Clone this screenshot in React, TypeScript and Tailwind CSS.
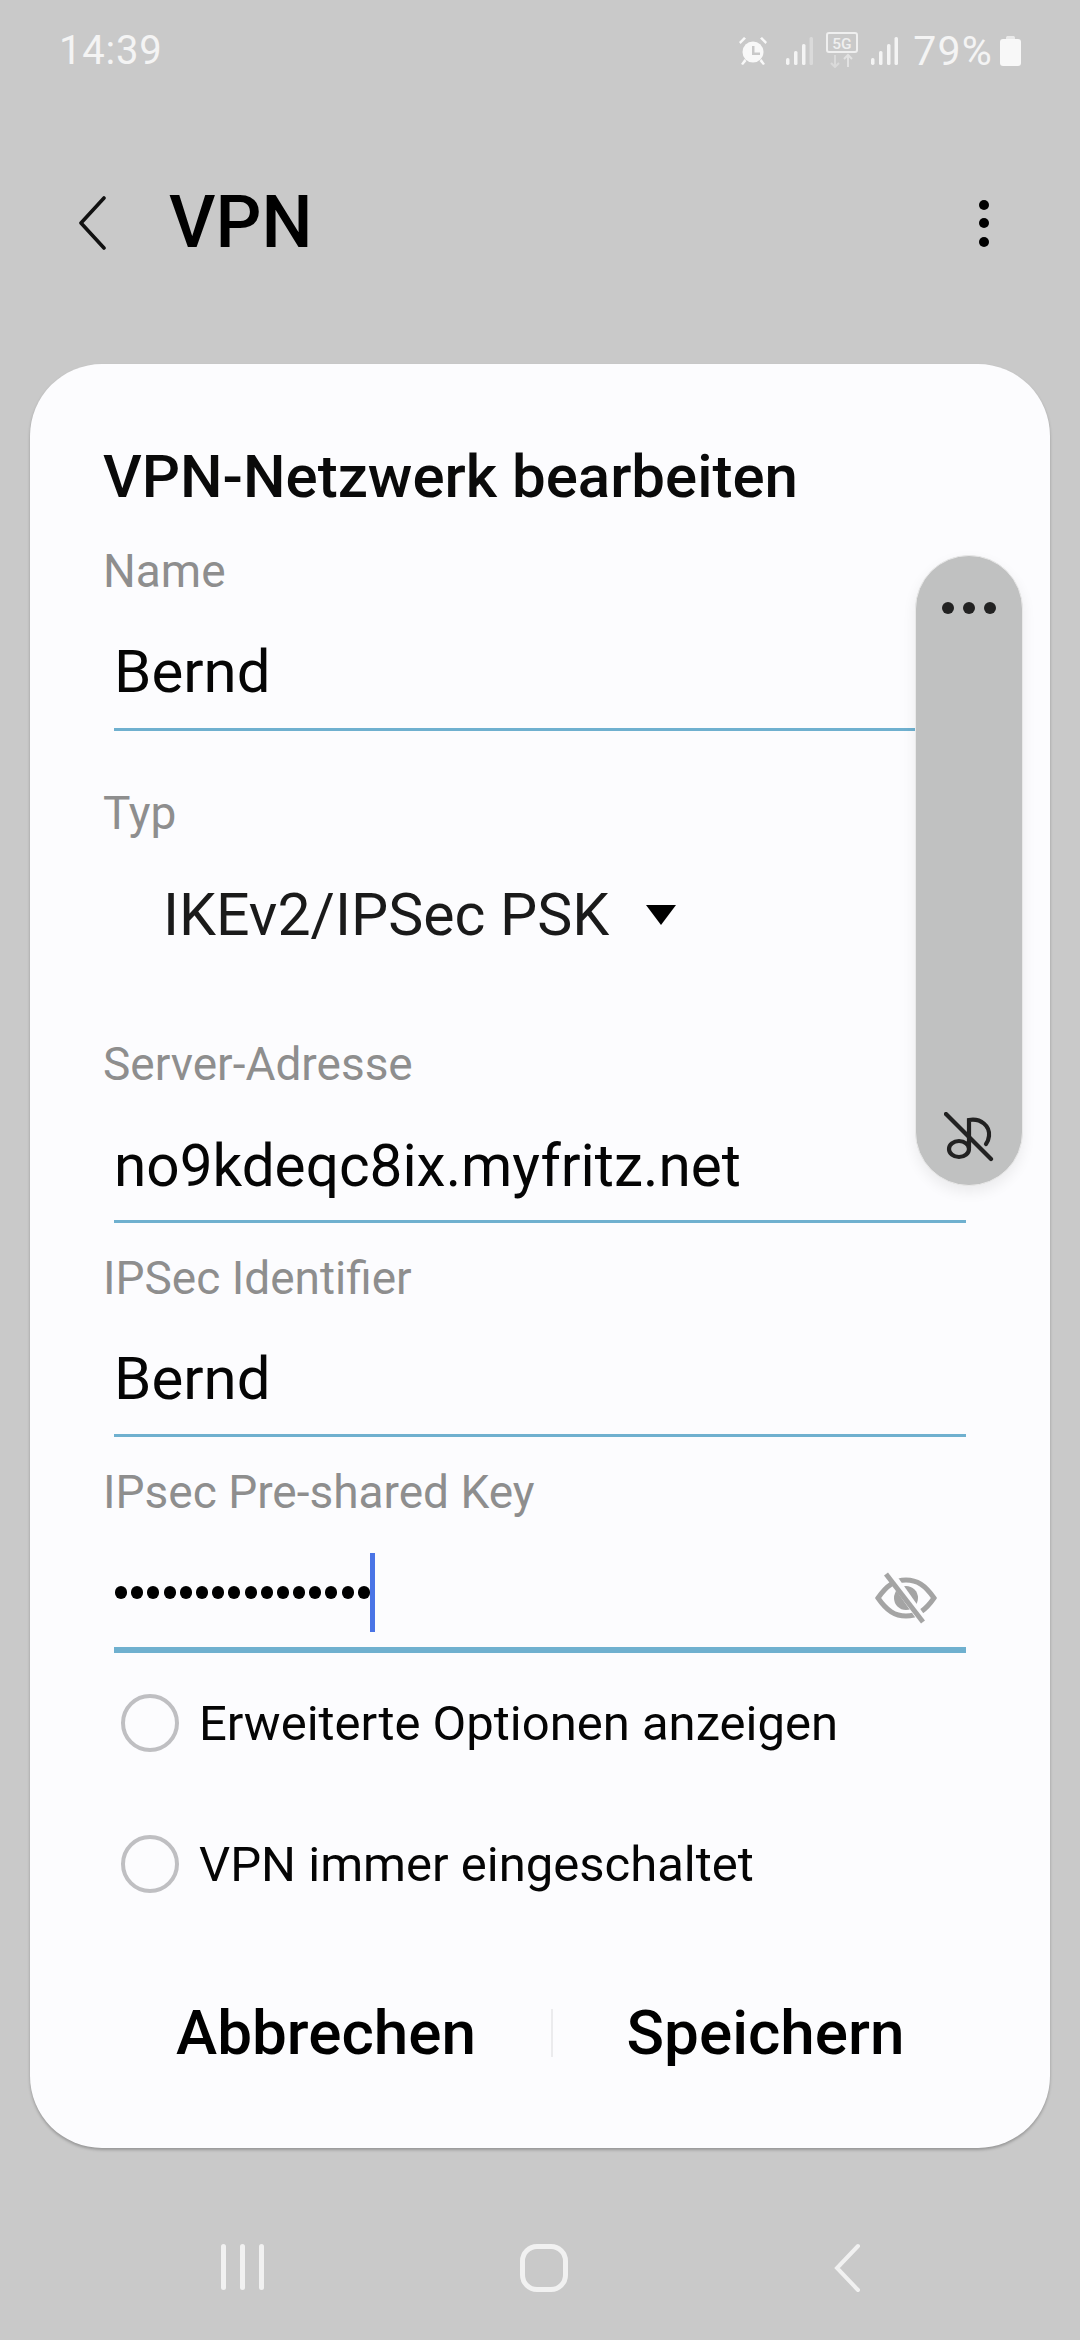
const font = "font-['Roboto','Liberation_Sans',sans-serif]";

function Label({ children, className = '' }: { children: string; className?: string }) {
  return <div className={`text-[46px] leading-[52px] text-[#8e8e8e] ${className}`}>{children}</div>;
}

function Field({ label, value, mt, rowClass }: { label: string; value: string; mt: string; rowClass: string }) {
  return (
    <div className={mt}>
      <Label>{label}</Label>
      <div className={`ml-[11px] mr-[84px] flex items-center border-b-[3px] border-[#6fb0cf] leading-none text-[#050505] ${rowClass}`}>
        {value}
      </div>
    </div>
  );
}

function Radio({ label, rowClass }: { label: string; rowClass: string }) {
  return (
    <div className={`ml-[18px] flex items-center gap-[20px] text-[49px] leading-none text-[#050505] ${rowClass}`}>
      <span className="size-[58px] shrink-0 rounded-full border-[4px] border-[#bfbfc2]" />
      <span>{label}</span>
    </div>
  );
}

function Bars({ dim }: { dim?: boolean }) {
  return (
    <svg width="27" height="28" viewBox="0 0 27 28" fill="#f4f4f4">
      <rect x="0" y="21" width="3.500" height="7" rx="1.700" />
      <rect x="8" y="14" width="3.500" height="14" rx="1.500" />
      <rect x="16" y="7" width="3.500" height="21" rx="1.500" />
      <rect x="23.500" y="0" width="3.500" height="28" rx="1.500" opacity={dim ? 0.4 : 1} />
    </svg>
  );
}

export default function App() {
  return (
    <div className={`flex h-[2340px] w-[1080px] flex-col overflow-hidden bg-[#c9c9c9] ${font}`}>
      <div className="flex h-[102px] shrink-0 items-center justify-between pl-[59px] pr-[59px] leading-none text-[#f4f4f4]">
        <span className="text-[40px] tracking-[0.8px]">14:39</span>
        <div className="flex items-center">
          <svg width="28" height="28" viewBox="0 0 28 28" fill="#f8f8f8">
            <path d="M0 5 5 0l2 1.500-5.500 5.500ZM28 5l-5-5-2 1.500L26.500 7Z" />
            <circle cx="14" cy="15" r="10.500" />
            <path d="M2 27l3.500-5 2 2-3.500 4ZM26 27l-3.500-5-2 2 3.500 4Z" />
            <path d="M13 9h2.500v6.500H21V18h-8Z" fill="#c9c9c9" />
          </svg>
          <span className="ml-[19px]"><Bars dim /></span>
          <svg width="32" height="36" viewBox="0 0 32 36" className="ml-[13px] -mt-[3px]">
            <rect x="1" y="1" width="30" height="19" rx="2" fill="none" stroke="#efefef" strokeWidth="2" />
            <text x="16" y="16.500" textAnchor="middle" fontSize="15.500" fontWeight="500" fill="#efefef">5G</text>
            <path d="M9 23v12M5 31l4 4 4-4" fill="none" stroke="#dadada" strokeWidth="2" />
            <path d="M22 35V23M18 27l4-4 4 4" fill="none" stroke="#e2e2e2" strokeWidth="2" />
          </svg>
          <span className="ml-[13px]"><Bars /></span>
          <span className="ml-[15px] text-[41px] tracking-[1.200px]">79%</span>
          <svg width="21" height="30" viewBox="0 0 21 30" className="ml-[7px]" fill="#f8f8f8">
            <rect x="6" y="0" width="9" height="5" rx="1.500" opacity="0.7" />
            <path d="M3 3h15a3 3 0 0 1 3 3v21a3 3 0 0 1-3 3H3a3 3 0 0 1-3-3V6a3 3 0 0 1 3-3Z" />
          </svg>
        </div>
      </div>

      <div className="flex h-[262px] shrink-0 items-center justify-between pb-[20px] pl-[78px] pr-[91px]">
        <div className="flex items-center">
          <svg width="28" height="54" viewBox="0 0 28 54" fill="none" stroke="#111" strokeWidth="3.600" strokeLinecap="round" strokeLinejoin="round">
            <path d="M26 2 3 27l23 25" />
          </svg>
          <h1 className="ml-[63px] text-[72px] font-medium leading-none text-black">VPN</h1>
        </div>
        <div className="flex flex-col gap-[8.500px]">
          <span className="size-[10px] rounded-full bg-black" />
          <span className="size-[10px] rounded-full bg-black" />
          <span className="size-[10px] rounded-full bg-black" />
        </div>
      </div>

      <div className="relative mx-[30px] h-[1784px] shrink-0 rounded-[72px] bg-[#fcfcfe] pl-[73px] shadow-[0_2px_3px_rgba(0,0,0,0.25)]">
        <h2 className="pt-[83px] text-[60px] font-medium leading-[60px] text-[#0a0a0a]">VPN-Netzwerk bearbeiten</h2>

        <Field label="Name" value="Bernd" mt="mt-[38px]" rowClass="h-[134px] pt-[18px] text-[60px]" />

        <Label className="mt-[56px]">Typ</Label>
        <div className="mt-[45px] flex items-center pl-[60px] text-[59px] leading-[62px] text-[#1a1a1a]">
          IKEv2/IPSec PSK
          <span className="ml-[37px] h-0 w-0 border-x-[15px] border-t-[20px] border-x-transparent border-t-black" />
        </div>

        <Field label="Server-Adresse" value="no9kdeqc8ix.myfritz.net" mt="mt-[92px]" rowClass="h-[133px] pt-[22px] text-[58.500px]" />
        <Field label="IPSec Identifier" value="Bernd" mt="mt-[29px]" rowClass="h-[133px] pt-[20px] text-[60px]" />

        <Label className="mt-[29px]">IPsec Pre-shared Key</Label>
        <div className="ml-[11px] mr-[84px] flex h-[135px] items-start border-b-[6px] border-[#6fb0cf] pt-[35px]">
          <span className="mt-[33px] ml-px flex gap-[4.200px]">
            {Array.from({ length: 16 }).map((_, i) => (
              <span key={i} className="h-[13px] w-[12px] rounded-full bg-black" />
            ))}
          </span>
          <span className="h-[79px] w-[5px] bg-[#4a74e6]" />
          <svg width="62" height="52" viewBox="0 0 62 52" className="ml-auto mr-[29px] mt-[19px]" fill="none" stroke="#a4a4a4" strokeWidth="5">
            <path d="M3 26C12 13 20 8 31 8s19 5 28 18c-9 13-17 18-28 18S12 39 3 26Z" />
            <circle cx="31" cy="26" r="12" fill="#a4a4a4" stroke="none" />
            <path d="M15 2l34 48" stroke="#fcfcfe" strokeWidth="9" />
            <path d="M11 2l37 48" />
          </svg>
        </div>

        <Radio label="Erweiterte Optionen anzeigen" rowClass="mt-[41px]" />
        <Radio label="VPN immer eingeschaltet" rowClass="mt-[83px]" />

        <div className="mt-[106px] ml-[-73px] flex items-center">
          <div className="w-[521px] pl-[71px] text-center text-[62px] font-medium leading-[68px] text-black">Abbrechen</div>
          <div className="h-[48px] w-[2px] bg-[#ebebed]" />
          <div className="flex-1 pr-[72px] text-center text-[62px] font-medium leading-[68px] text-black">Speichern</div>
        </div>

        <div className="absolute left-[885px] top-[191px] flex h-[631px] w-[108px] flex-col items-center justify-between rounded-[54px] border border-[#e9e9e9] bg-[#c0c1c1] pb-[23px] pt-[46px] shadow-[0_6px_14px_rgba(0,0,0,0.07)]">
          <div className="flex gap-[9px]">
            <span className="size-[12px] rounded-full bg-[#222]" />
            <span className="size-[12px] rounded-full bg-[#222]" />
            <span className="size-[12px] rounded-full bg-[#222]" />
          </div>
          <svg width="50" height="50" viewBox="0 0 50 50" fill="none" stroke="#222" strokeWidth="4.200" strokeLinecap="round">
            <ellipse cx="15" cy="37" rx="10" ry="8" />
            <path d="M25 36V8c12-2 21 6 20 16-.3 3-1.500 6-3 8" />
            <path d="M2 2l45 45" />
          </svg>
        </div>
      </div>

      <div className="flex flex-1 items-start pl-[221px] pt-[96px]">
        <div className="flex gap-[14px]">
          <span className="h-[46px] w-[5px] rounded-full bg-[#f1f1f1]" />
          <span className="h-[46px] w-[5px] rounded-full bg-[#f1f1f1]" />
          <span className="h-[46px] w-[5px] rounded-full bg-[#f1f1f1]" />
        </div>
        <span className="ml-[256px] size-[48px] rounded-[17px] border-[5px] border-[#f1f1f1]" />
        <svg width="28" height="50" viewBox="0 0 28 50" className="ml-[265px] -mt-[1px]" fill="none" stroke="#f1f1f1" strokeWidth="4" strokeLinecap="round">
          <path d="M25 3 4 25l21 22" />
        </svg>
      </div>
    </div>
  );
}
